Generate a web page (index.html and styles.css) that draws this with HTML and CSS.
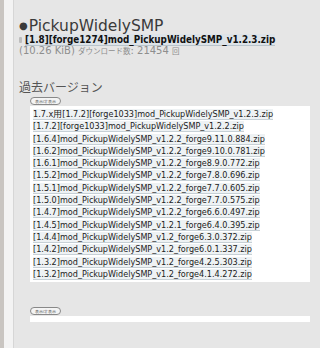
FILE: index.html
```html
<!DOCTYPE html>
<html lang="ja">
<head>
	<meta charset="UTF-8" />
	<title>PickupWidelySMP</title>
	<link rel="stylesheet" href="styles.css">
</head>
<body>
	<div class="page">
		<div class="edge"></div>
		<div class="rail"></div>
		<div class="main">
			<div class="mod-title"><span class="dot">●</span>PickupWidelySMP</div>
			<div class="latest">
				<span class="file-icon"></span>
				<a class="latest-link" href="#">[1.8][forge1274]mod_PickupWidelySMP_v1.2.3.zip</a>
			</div>
			<div class="meta">(10.26 KiB) <span class="jp">ダウンロード数</span>: 21454 <span class="jp">回</span></div>

			<div class="section-title">過去バージョン</div>
			<div class="old">
				<button class="toggle">表示/非表示</button>
				<ul class="files">
					<li><a href="#">1.7.x用[1.7.2][forge1033]mod_PickupWidelySMP_v1.2.3.zip</a></li>
					<li><a href="#">[1.7.2][forge1033]mod_PickupWidelySMP_v1.2.2.zip</a></li>
					<li><a href="#">[1.6.4]mod_PickupWidelySMP_v1.2.2_forge9.11.0.884.zip</a></li>
					<li><a href="#">[1.6.2]mod_PickupWidelySMP_v1.2.2_forge9.10.0.781.zip</a></li>
					<li><a href="#">[1.6.1]mod_PickupWidelySMP_v1.2.2_forge8.9.0.772.zip</a></li>
					<li><a href="#">[1.5.2]mod_PickupWidelySMP_v1.2.2_forge7.8.0.696.zip</a></li>
					<li><a href="#">[1.5.1]mod_PickupWidelySMP_v1.2.2_forge7.7.0.605.zip</a></li>
					<li><a href="#">[1.5.0]mod_PickupWidelySMP_v1.2.2_forge7.7.0.575.zip</a></li>
					<li><a href="#">[1.4.7]mod_PickupWidelySMP_v1.2.2_forge6.6.0.497.zip</a></li>
					<li><a href="#">[1.4.5]mod_PickupWidelySMP_v1.2.1_forge6.4.0.395.zip</a></li>
					<li><a href="#">[1.4.4]mod_PickupWidelySMP_v1.2_forge6.3.0.372.zip</a></li>
					<li><a href="#">[1.4.2]mod_PickupWidelySMP_v1.2_forge6.0.1.337.zip</a></li>
					<li><a href="#">[1.3.2]mod_PickupWidelySMP_v1.2_forge4.2.5.303.zip</a></li>
					<li><a href="#">[1.3.2]mod_PickupWidelySMP_v1.2_forge4.1.4.272.zip</a></li>
				</ul>
			</div>

			<div class="old second">
				<button class="toggle">表示/非表示</button>
				<div class="files empty"></div>
			</div>
		</div>
	</div>
</body>
</html>
```

FILE: styles.css
```css
html,
body {
	margin: 0;
	height: 100%;
	background: #e6e6e6;
}

.page {
	display: flex;
	min-height: 100%;
}

.edge {
	width: 4px;
	background: #c9c5c1;
}

.rail {
	width: 9px;
	background: #f3f3f3;
	border-right: 1px solid #d6d6d6;
}

.main {
	flex: 1;
	padding: 18px 10px 0 5px;
	font-family: "DejaVu Sans", "Noto Sans CJK JP", sans-serif;
	color: #333;
}

.mod-title {
	font-size: 15.5px;
	line-height: 16px;
	color: #3a3a3a;
}

.mod-title .dot {
	font-size: 10px;
	vertical-align: 2px;
	margin-right: 1px;
}

.latest {
	display: flex;
	align-items: center;
	gap: 3px;
	height: 11px;
}

.file-icon {
	width: 3px;
	height: 6px;
	background: #bdbdbd;
	border-radius: 1px;
}

.latest-link {
	font-family: "DejaVu Sans Condensed", "DejaVu Sans", sans-serif;
	font-stretch: condensed;
	font-size: 9.8px;
	line-height: 11px;
	font-weight: bold;
	color: #111;
	text-decoration: none;
	border-bottom: 1px solid #b8c4cc;
	background: #dde3e8;
}

.meta {
	font-size: 10px;
	line-height: 11px;
	color: #8e8e8e;
}

.meta .jp {
	font-size: 7.5px;
}

.section-title {
	margin-top: 24px;
	font-size: 12px;
	line-height: 14px;
	color: #555;
}

.old {
	margin-left: 11px;
}

.toggle {
	display: block;
	box-sizing: border-box;
	margin: 2px 0 1px;
	padding: 0 4px;
	height: 8px;
	font-size: 4px;
	line-height: 5px;
	border: 1px solid #888;
	border-radius: 4px;
	background: #f4f4f4;
	color: #555;
}

.files {
	list-style: none;
	margin: 0;
	padding: 2px 3px;
	background: #fff;
	font-family: "DejaVu Sans Condensed", "DejaVu Sans", sans-serif;
	font-stretch: condensed;
	font-size: 9px;
	line-height: 12.3px;
}

.files a {
	color: #222;
	text-decoration: none;
	background: #eef2f4;
	border-bottom: 1px solid #c6d0d6;
}

.second {
	margin-top: 25px;
}

.files.empty {
	height: 2px;
	padding: 2px 0;
}
```
